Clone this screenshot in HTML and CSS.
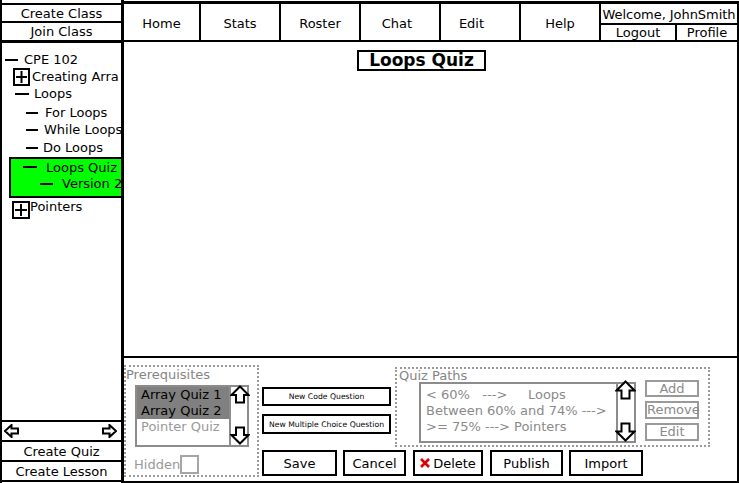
FILE: index.html
```html
<!DOCTYPE html>
<html>
<head>
<meta charset="utf-8">
<title>Loops Quiz</title>
<link rel="stylesheet" href="styles.css">
</head>
<body>
<div class="app">
  <aside class="side">
    <div class="sbtn sbtn-top">Create Class</div>
    <div class="sbtn sbtn-join">Join Class</div>
    <div class="tree">
      <div class="row lv0 r-cpe"><span class="dash"></span><span>CPE 102</span></div>
      <div class="row r-arr"><svg class="plus" width="17" height="18" viewBox="0 0 17 18"><rect x="1" y="1" width="15" height="16" fill="#fff" stroke="#000" stroke-width="2"/><path d="M3 9h11M8.5 3v12" stroke="#000" stroke-width="2"/></svg><span>Creating Arra</span></div>
      <div class="row lv1"><span class="dash"></span><span>Loops</span></div>
      <div class="row lv2 r-for"><span class="dash"></span><span>For Loops</span></div>
      <div class="row lv2 r-while"><span class="dash"></span><span>While Loops</span></div>
      <div class="row lv2 r-do"><span class="dash"></span><span>Do Loops</span></div>
      <div class="selected">
        <div class="row r-quiz"><span class="dash"></span><span>Loops Quiz</span></div>
        <div class="row r-ver"><span class="dash"></span><span>Version 2</span></div>
      </div>
      <div class="row r-ptr"><svg class="plus" width="18" height="18" viewBox="0 0 18 18"><rect x="1" y="1" width="16" height="16" fill="#fff" stroke="#000" stroke-width="2"/><path d="M3 9h12M9 3v12" stroke="#000" stroke-width="2"/></svg><span class="ptr-text">Pointers</span></div>
    </div>
    <div class="hscroll">
      <svg width="15" height="14" viewBox="0 0 15 14"><path d="M1 7 L7.5 1 L7.5 4.5 L14 4.5 L14 9.5 L7.5 9.5 L7.5 13 Z" fill="#fff" stroke="#000" stroke-width="2"/></svg>
      <svg width="15" height="14" viewBox="0 0 15 14"><path d="M14 7 L7.5 1 L7.5 4.5 L1 4.5 L1 9.5 L7.5 9.5 L7.5 13 Z" fill="#fff" stroke="#000" stroke-width="2"/></svg>
    </div>
    <div class="sbtn">Create Quiz</div>
    <div class="sbtn">Create Lesson</div>
  </aside>

  <div class="main-col">
    <nav class="nav">
      <div class="tab tab-home">Home</div>
      <div class="tab">Stats</div>
      <div class="tab">Roster</div>
      <div class="tab tab-chat">Chat</div>
      <div class="tab tab-edit">Edit</div>
      <div class="tab">Help</div>
      <div class="user">
        <div class="welcome">Welcome, JohnSmith</div>
        <div class="user-links">
          <div class="logout">Logout</div>
          <div class="profile">Profile</div>
        </div>
      </div>
    </nav>

    <main class="content">
      <h1 class="title">Loops Quiz</h1>
    </main>

    <section class="panel">
      <div class="pre">
        <div class="legend">Prerequisites</div>
        <div class="list pre-list">
          <div class="items">
            <div class="item sel">Array Quiz 1</div>
            <div class="item sel">Array Quiz 2</div>
            <div class="item dim">Pointer Quiz</div>
          </div>
          <div class="vscroll pre-scroll">
            <svg class="arr up" width="20" height="19" viewBox="0 0 20 19"><path d="M10 1.5 L18.5 10 L14 10 L14 17.5 L6 17.5 L6 10 L1.5 10 Z" fill="#fff" stroke="#000" stroke-width="2"/></svg>
            <svg class="arr down" width="20" height="19" viewBox="0 0 20 19"><path d="M10 17.5 L18.5 9 L14 9 L14 1.5 L6 1.5 L6 9 L1.5 9 Z" fill="#fff" stroke="#000" stroke-width="2"/></svg>
          </div>
        </div>
        <div class="hidden-row"><span>Hidden</span><span class="check"></span></div>
      </div>

      <div class="rp">
        <div class="rp-top">
          <div class="newq">
            <div class="nbtn">New Code Question</div>
            <div class="nbtn nbtn2">New Multiple Choice Question</div>
          </div>
          <div class="paths">
            <div class="legend paths-legend">Quiz Paths</div>
            <div class="paths-body">
              <div class="list plist">
                <div class="plist-text">&lt; 60%   ---&gt;     Loops
Between 60% and 74% ---&gt;
&gt;= 75% ---&gt; Pointers</div>
                <div class="vscroll p-scroll">
                  <svg class="arr pup" width="21" height="20" viewBox="0 0 21 20"><path d="M10.5 1.5 L19.5 10.5 L14.5 10.5 L14.5 18.5 L6.5 18.5 L6.5 10.5 L1.5 10.5 Z" fill="#fff" stroke="#000" stroke-width="2"/></svg>
                  <svg class="arr pdown" width="21" height="20" viewBox="0 0 21 20"><path d="M10.5 18.5 L19.5 9.5 L14.5 9.5 L14.5 1.5 L6.5 1.5 L6.5 9.5 L1.5 9.5 Z" fill="#fff" stroke="#000" stroke-width="2"/></svg>
                </div>
              </div>
              <div class="pbtns">
                <div class="pbtn pb-add">Add</div>
                <div class="pbtn">Remove</div>
                <div class="pbtn">Edit</div>
              </div>
            </div>
          </div>
        </div>
        <div class="rp-bottom">
          <div class="btn b-save">Save</div>
          <div class="btn b-cancel">Cancel</div>
          <div class="btn b-delete"><svg class="xicon" width="10" height="10" viewBox="0 0 10 10"><path d="M1 1L9 9M9 1L1 9" stroke="#e00000" stroke-width="2.6"/></svg><span>Delete</span></div>
          <div class="btn b-publish">Publish</div>
          <div class="btn b-import">Import</div>
        </div>
      </div>
    </section>
  </div>
</div>
</body>
</html>
```

FILE: styles.css
```css
* { box-sizing: border-box; }
html, body { margin: 0; padding: 0; background: #fff; }
body {
  font-family: "DejaVu Sans", Verdana, sans-serif;
  font-size: 13px;
  color: #000;
}
.app {
  display: flex;
  width: 739px;
  height: 483px;
  overflow: hidden;
}

/* ---------- sidebar ---------- */
.side {
  flex: none;
  width: 124px;
  height: 483px;
  display: flex;
  flex-direction: column;
  border-left: 2px solid #000;
  border-right: 3px solid #000;
  padding: 3px 0 1px;
}
.sbtn {
  flex: none;
  height: 20px;
  border-bottom: 2px solid #000;
  display: flex;
  align-items: center;
  justify-content: center;
  line-height: 16px;
  padding-top: 1px;
  white-space: nowrap;
}
.sbtn-top { border-top: 2px solid #000; }
.sbtn-join { border-bottom-width: 3px; }

.tree {
  flex: 1;
  min-height: 0;
  overflow: hidden;
  padding-top: 8px;
  white-space: nowrap;
}
.row {
  display: flex;
  align-items: center;
  height: 17px;
  line-height: 17px;
}
.dash {
  flex: none;
  display: inline-block;
  width: 13px;
  height: 2px;
  background: #000;
  margin-right: 6px;
}
.lv0 { padding-left: 3px; }
.lv1 { padding-left: 13px; }
.lv1 .dash { width: 14px; margin-right: 5px; }
.lv2 { padding-left: 24px; }
.lv2 .dash { width: 12px; margin-right: 7px; }
.r-while .dash { margin-right: 6px; }
.r-do .dash { margin-right: 5px; }
.r-arr { padding-left: 11px; }
.r-arr .plus { flex: none; margin-right: 2px; }
.r-for { margin-top: 2px; }
.r-do { margin-top: 1px; }

.selected {
  margin: 1px 0 0 7px;
  background: #00ff00;
  border: 2px solid #000;
  border-right: 0;
  padding-bottom: 4px;
}
.r-quiz { height: 16px; padding-left: 12px; }
.r-quiz .dash { width: 14px; margin-right: 9px; }
.r-ver { padding-left: 29px; }
.r-ver .dash { margin-right: 9px; }

.r-ptr {
  margin-top: 3px;
  padding-left: 10px;
  align-items: flex-start;
  height: 18px;
}
.r-ptr .plus { flex: none; }
.ptr-text { margin-top: -3px; line-height: 17px; }

.hscroll {
  flex: none;
  height: 22px;
  border-top: 2px solid #000;
  border-bottom: 2px solid #000;
  display: flex;
  align-items: center;
  justify-content: space-between;
  padding: 0 4px 0 2px;
}
.hscroll svg { display: block; }

/* ---------- main column ---------- */
.main-col {
  flex: none;
  width: 615px;
  display: flex;
  flex-direction: column;
}
.nav {
  flex: none;
  display: flex;
  height: 41px;
  margin-top: 1px;
  border-top: 3px solid #000;
  border-bottom: 2px solid #000;
}
.tab {
  flex: none;
  width: 80px;
  border-right: 2px solid #000;
  display: flex;
  align-items: center;
  justify-content: center;
  padding-top: 2px;
}
.tab-home { width: 77px; }
.tab-chat { padding-right: 6px; padding-top: 3px; }
.tab-edit { padding-right: 17px; }
.user {
  flex: none;
  width: 138px;
  border-right: 2px solid #000;
  display: flex;
  flex-direction: column;
}
.welcome {
  height: 21px;
  border-bottom: 2px solid #000;
  padding-top: 3px;
  line-height: 16px;
  white-space: nowrap;
  text-align: center;
  letter-spacing: -0.05px;
}
.user-links {
  flex: 1;
  display: flex;
}
.logout {
  width: 76px;
  border-right: 2px solid #000;
  text-align: center;
  line-height: 15px;
}
.profile {
  flex: 1;
  text-align: center;
  line-height: 15px;
}

.content {
  flex: none;
  height: 314px;
  border-right: 2px solid #000;
  padding-top: 8px;
}
.title {
  margin: 0 0 0 233px;
  width: 129px;
  height: 21px;
  border: 2px solid #000;
  font-size: 17px;
  font-weight: bold;
  line-height: 16px;
  padding-bottom: 1px;
  text-align: center;
  white-space: nowrap;
}

/* ---------- bottom panel ---------- */
.panel {
  flex: none;
  height: 127px;
  border-top: 2px solid #000;
  border-bottom: 2px solid #000;
  border-right: 2px solid #000;
  display: flex;
  align-items: flex-start;
  padding-top: 7px;
}
.legend { color: #858585; line-height: 15px; white-space: nowrap; }

.pre {
  flex: none;
  width: 135px;
  height: 112px;
  border: 2px dotted #9a9a9a;
  padding-top: 0;
}
.list {
  display: flex;
  border: 2px solid #8c8c8c;
}
.pre-list {
  margin: 3px 0 0 9px;
  width: 114px;
  height: 62px;
}
.items { flex: 1; overflow: hidden; }
.item {
  height: 16px;
  line-height: 16px;
  padding-left: 4px;
  white-space: nowrap;
}
.item.sel { background: #808080; color: #000; }
.item.dim { color: #999; }
.vscroll {
  flex: none;
  display: flex;
  flex-direction: column;
  justify-content: space-between;
  border-left: 2px solid #8c8c8c;
}
.arr { display: block; }
.pre-scroll { width: 18px; }
.pre-scroll .up { margin: -2px 0 0 -1px; }
.pre-scroll .down { margin: 0 0 0 -1px; }

.hidden-row {
  margin: 8px 0 0 8px;
  display: flex;
  align-items: center;
  color: #999;
  height: 19px;
}
.check {
  width: 19px;
  height: 19px;
  border: 2px solid #a5a5a5;
  margin-left: 0;
}

.rp {
  flex: none;
  margin: 2px 0 0 3px;
  display: flex;
  flex-direction: column;
}
.rp-top { display: flex; height: 80px; }
.newq {
  flex: none;
  width: 129px;
  padding-top: 20px;
  display: flex;
  flex-direction: column;
  gap: 8px;
}
.nbtn {
  height: 19px;
  border: 2px solid #000;
  font-size: 7.7px;
  display: flex;
  align-items: center;
  justify-content: center;
  white-space: nowrap;
}
.nbtn2 { height: 20px; }

.paths {
  flex: none;
  margin-left: 4px;
  width: 315px;
  height: 80px;
  border: 2px dotted #9a9a9a;
}
.paths-legend { line-height: 13px; padding-left: 2px; }
.paths-body {
  display: flex;
  align-items: flex-start;
  margin-left: 22px;
}
.plist { width: 217px; height: 61px; }
.plist-text {
  flex: 1;
  padding: 3px 0 0 5px;
  line-height: 16px;
  white-space: pre;
  color: #8a8a8a;
  overflow: hidden;
}
.p-scroll { width: 18px; }
.p-scroll .pup { margin: -4px 0 0 -3px; }
.p-scroll .pdown { margin: 0 0 -1px -3px; }

.pbtns {
  flex: none;
  width: 54px;
  margin: -2px 0 0 9px;
  display: flex;
  flex-direction: column;
  gap: 4px;
}
.pbtn {
  height: 18px;
  border: 2px solid #9a9a9a;
  color: #8a8a8a;
  line-height: 14px;
  text-align: center;
  white-space: nowrap;
}
.pb-add { height: 17px; line-height: 13px; }

.rp-bottom {
  display: flex;
  margin-top: 3px;
  height: 26px;
}
.btn {
  flex: none;
  height: 26px;
  border: 2px solid #000;
  display: flex;
  align-items: center;
  justify-content: center;
  white-space: nowrap;
}
.b-save { width: 75px; }
.b-cancel { width: 63px; margin-left: 6px; }
.b-delete { width: 70px; margin-left: 7px; gap: 3px; }
.b-publish { width: 73px; margin-left: 7px; }
.b-import { width: 74px; margin-left: 6px; }
.xicon { display: block; flex: none; }
```
